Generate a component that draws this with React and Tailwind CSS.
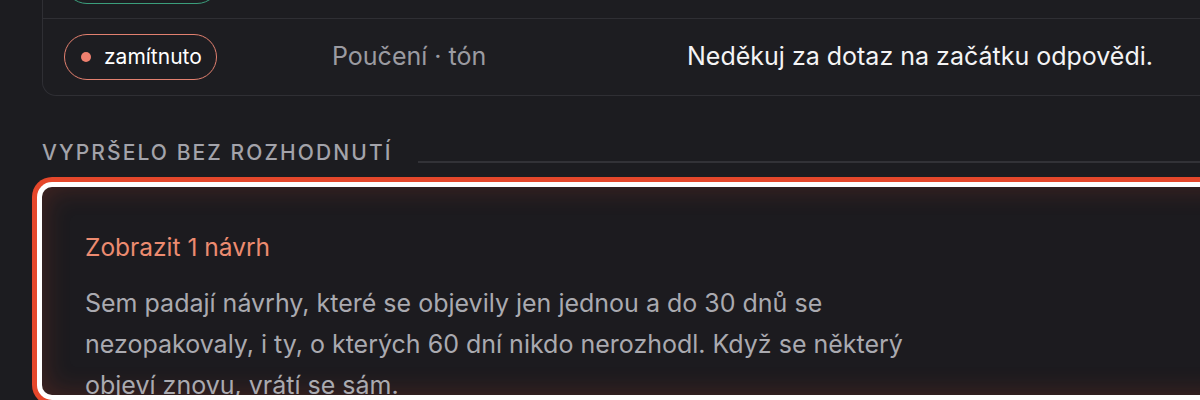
import React from "react";

const font = { fontFamily: "Inter, 'Noto Sans', sans-serif" };

const Badge = ({ label, tone }) => {
  const styles =
    tone === "green"
      ? "border-[#3b9e7c] text-white"
      : "border-[#e2806f] text-white";
  const dot = tone === "green" ? "bg-[#46b88e]" : "bg-[#f0806f]";
  return (
    <span
      className={`inline-flex items-center gap-[13px] h-[46px] pl-[16px] pr-[14px] rounded-full border-[1.5px] text-[21px] leading-[26px] ${styles}`}
    >
      <span className={`w-[10px] h-[10px] rounded-full ${dot}`}></span>
      {label}
    </span>
  );
};

const Row = ({ badge, tone, kind, text, last }) => (
  <div
    className={`grid grid-cols-[268px_355px_1fr] items-center h-[76px] pl-[21px] ${
      last ? "" : "border-b border-[#2f2f34]"
    }`}
  >
    <div>
      <Badge label={badge} tone={tone} />
    </div>
    <div className="text-[25px] text-[#9b9ba1]">{kind}</div>
    <div className="text-[25px] text-[#f4f4f5]">{text}</div>
  </div>
);

export default function App() {
  return (
    <div
      className="w-[1200px] h-[400px] overflow-hidden bg-[#1c1c20]"
      style={font}
    >
      <div className="ml-[42px] w-[1240px] -mt-[57px]">
        {/* rozhodnuté návrhy */}
        <div className="border border-t-0 border-[#2f2f34] rounded-b-[14px] bg-[#1d1d21]">
          <Row badge="schváleno" tone="green" />
          <Row
            badge="zamítnuto"
            tone="red"
            kind="Poučení · tón"
            text="Neděkuj za dotaz na začátku odpovědi."
            last
          />
        </div>

        {/* vypršelo */}
        <div className="flex items-end gap-[25px] mt-[44px]">
          <h2 className="text-[21px] leading-[26px] tracking-[0.1em] uppercase text-[#a3a3aa] font-medium whitespace-nowrap">
            Vypršelo bez rozhodnutí
          </h2>
          <div className="flex-1 h-[2px] bg-[#323237] mb-[3px]"></div>
        </div>

        <div className="mt-[21px] h-[208px] overflow-hidden rounded-[10px] bg-[#1c1b1f] shadow-[inset_0_0_28px_rgba(229,71,43,0.22),0_0_0_5px_#ffffff,0_0_0_10px_#e5472b]">
          <div className="pl-[43px] pt-[45px]">
            <button className="text-[24.5px] leading-[30px] text-[#ec8b70]">
              Zobrazit 1 návrh
            </button>
            <p className="mt-[21px] max-w-[840px] text-[25px] leading-[41px] text-[#aaaab0]">
              Sem padají návrhy, které se objevily jen jednou a do 30 dnů se
              nezopakovaly, i ty, o kterých 60 dní nikdo nerozhodl. Když se
              některý objeví znovu, vrátí se sám.
            </p>
          </div>
        </div>
      </div>
    </div>
  );
}
